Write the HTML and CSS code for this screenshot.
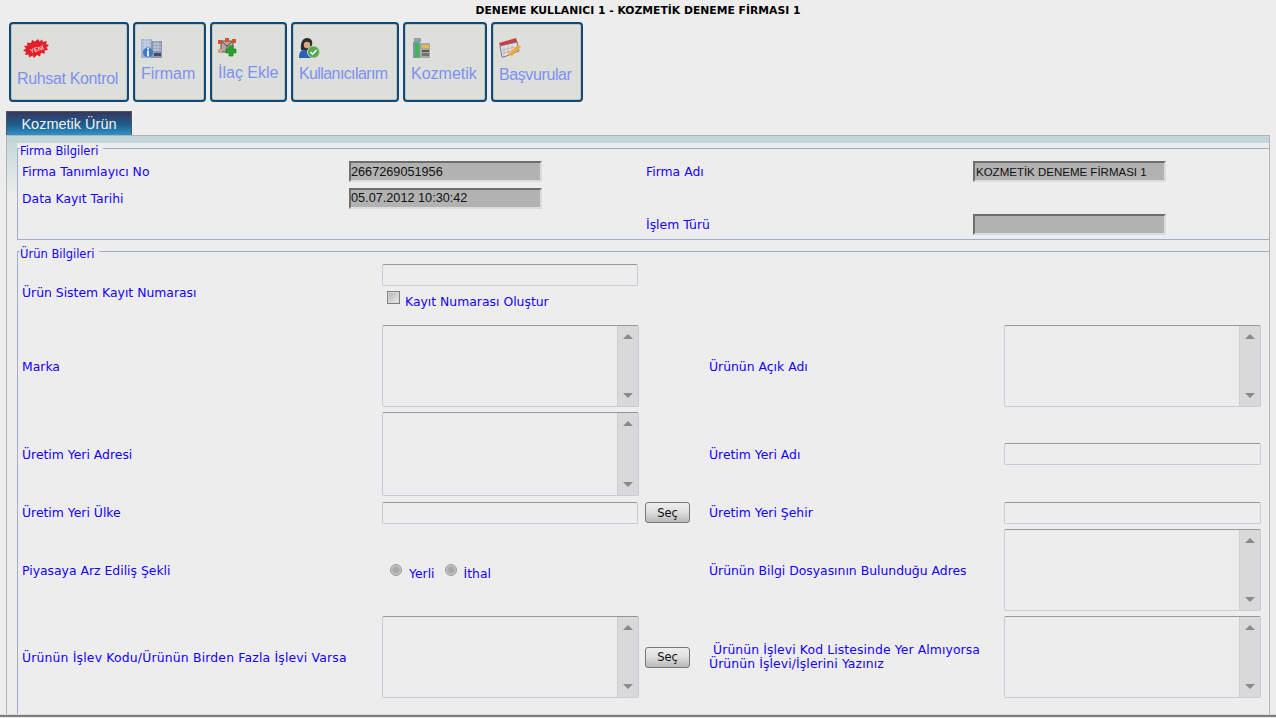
FILE: index.html
```html
<!DOCTYPE html>
<html lang="tr">
<head>
    <meta charset="UTF-8">
    <title>Kozmetik Ürün</title>
    <link rel="stylesheet" href="styles.css">
</head>
<body>
    <div class="title">DENEME KULLANICI 1 - KOZMETİK DENEME FİRMASI 1</div>

    <!-- Ust menu -->
    <nav class="menu">
        <a class="menu-btn btn-ruhsat">
            <svg class="menu-icon" width="26" height="21" viewBox="0 0 26 21">
                <polygon fill="#e3202a" points="15,1 16.500,3.500 19,1.500 20,4 24,3 23,6 26,7 23.500,9.500 25,12 21.500,12.500 22,15.500 18,15 17,18.500 14,17 11,20 9.500,17.500 6,19.500 5.500,16.500 2,17 3,14 0,12.500 3,10.500 1,8 4.500,7.500 4,4.500 8,5 9,2 12,3.500"/>
                <text x="6.500" y="13.500" font-size="6" font-weight="bold" fill="#f8c8c8" font-family="Liberation Sans" transform="rotate(-16 13 10)">YENİ</text>
            </svg>
            <span>Ruhsat Kontrol</span>
        </a>
        <a class="menu-btn btn-firmam">
            <svg class="menu-icon" width="21" height="21" viewBox="0 0 21 21">
                <rect x="0" y="1" width="11" height="19" fill="#a4b6d8"/>
                <rect x="10" y="3" width="11" height="17" fill="#8b98b0"/>
                <path d="M1 4h9M1 7h9M1 10h9M12 6h8M12 9h8M12 12h8M4 1v9M7 1v9M14 3v10M17 3v10" stroke="#d3dcee" stroke-width=".8"/>
                <circle cx="7" cy="14.500" r="5" fill="#3d78c9"/>
                <rect x="6" y="12.500" width="2" height="6" fill="#e8f0ff"/>
                <rect x="6" y="10" width="2" height="1.500" fill="#e8f0ff"/>
                <rect x="13" y="15" width="7" height="3" fill="#424c62"/>
            </svg>
            <span>Firmam</span>
        </a>
        <a class="menu-btn btn-ilac">
            <svg class="menu-icon" width="19" height="19" viewBox="0 0 19 19">
                <path d="M3 3h12v11H3z" fill="#b3a79c" stroke="#5e5247"/>
                <path d="M3 3l6 5 6-5M9 8v6" stroke="#5e5247" fill="none"/>
                <rect x="0" y="2" width="4" height="4" fill="#d8502a"/>
                <rect x="7" y="0" width="4" height="4" fill="#d8502a"/>
                <rect x="14" y="1" width="4" height="4" fill="#d8502a"/>
                <rect x="0" y="11" width="4" height="4" fill="#d8a08a"/>
                <path d="M11 8h4v3h3v4h-3v3h-4v-3H8v-4h3z" fill="#27a32f" stroke="#137a1c" stroke-width=".6"/>
            </svg>
            <span>İlaç Ekle</span>
        </a>
        <a class="menu-btn btn-kullanici">
            <svg class="menu-icon" width="21" height="21" viewBox="0 0 21 21">
                <path d="M0 20c0-6 2-8 5-8h4c3 0 4 2 4 8z" fill="#2a60b8"/>
                <path d="M2 12C1 4 4 0 8 0s6 3 5 7l-2 5z" fill="#2b2b33"/>
                <circle cx="8" cy="7" r="3.200" fill="#dba87e"/>
                <circle cx="14.500" cy="14" r="6" fill="#58a84f" stroke="#b7d8b0"/>
                <path d="M11.500 14l2.200 2.200L17.500 12" stroke="#fff" stroke-width="1.600" fill="none"/>
            </svg>
            <span>Kullanıcılarım</span>
        </a>
        <a class="menu-btn btn-kozmetik">
            <svg class="menu-icon" width="18" height="21" viewBox="0 0 18 21">
                <rect x="1" y="0" width="7" height="4" fill="#8fa0a8"/>
                <rect x="0" y="4" width="7" height="16" fill="#7f97a8"/>
                <rect x="2" y="5" width="4" height="14" fill="#3fb84f"/>
                <rect x="7" y="5" width="10" height="15" fill="#a7a9a6"/>
                <rect x="9" y="7" width="7" height="3" fill="#e9b949"/>
                <rect x="9" y="12" width="7" height="2" fill="#5a5a55"/>
                <rect x="9" y="15" width="7" height="3" fill="#74746c"/>
            </svg>
            <span>Kozmetik</span>
        </a>
        <a class="menu-btn btn-basvuru">
            <svg class="menu-icon" width="22" height="20" viewBox="0 0 22 20">
                <path d="M0 5l17-5 2 6-17 5z" fill="#cf3f38"/>
                <path d="M1 8l17-4 2 9-15 6H3z" fill="#e4dfe0" stroke="#6d7794"/>
                <path d="M5 9v8M9 8v8M13 7v6M3 12l13-3M4 15l8-2" stroke="#c0a9a0" stroke-width=".8"/>
                <path d="M9 16l10-9 3 2-9 9z" fill="#efa83a"/>
            </svg>
            <span>Başvurular</span>
        </a>
    </nav>

    <div class="tab">Kozmetik Ürün</div>

    <div class="panel">
        <fieldset class="group group-firma">
            <legend>Firma Bilgileri</legend>
            <div class="firma-grid">
                <label>Firma Tanımlayıcı No</label>
                <input class="readonly" type="text" value="2667269051956" readonly>
                <label>Firma Adı</label>
                <input class="readonly readonly-caps" type="text" value="KOZMETİK DENEME FİRMASI 1" readonly>

                <label>Data Kayıt Tarihi</label>
                <input class="readonly" type="text" value="05.07.2012 10:30:42" readonly>
                <span></span>
                <span></span>

                <span></span>
                <span></span>
                <label>İşlem Türü</label>
                <input class="readonly" type="text" readonly>
            </div>
        </fieldset>

        <fieldset class="group group-urun">
            <legend>Ürün Bilgileri</legend>
            <div class="urun-grid">
                <!-- Sistem kayit -->
                <label>Ürün Sistem Kayıt Numarası</label>
                <div class="kayit">
                    <input class="field" type="text">
                    <div class="check-line">
                        <span class="check"></span>
                        <label>Kayıt Numarası Oluştur</label>
                    </div>
                </div>
                <span></span>
                <span></span>

                <!-- Marka -->
                <label>Marka</label>
                <div class="memo"><textarea></textarea><div class="scroll"><i class="up"></i><i class="down"></i></div></div>
                <label>Ürünün Açık Adı</label>
                <div class="memo"><textarea></textarea><div class="scroll"><i class="up"></i><i class="down"></i></div></div>

                <!-- Uretim yeri -->
                <label>Üretim Yeri Adresi</label>
                <div class="memo memo-tall"><textarea></textarea><div class="scroll"><i class="up"></i><i class="down"></i></div></div>
                <label>Üretim Yeri Adı</label>
                <input class="field" type="text">

                <label>Üretim Yeri Ülke</label>
                <div class="with-btn">
                    <input class="field" type="text">
                    <button type="button" class="sec">Seç</button>
                </div>
                <label>Üretim Yeri Şehir</label>
                <input class="field" type="text">

                <!-- Arz sekli -->
                <label>Piyasaya Arz Ediliş Şekli</label>
                <div class="radios">
                    <span class="radio"></span>
                    <label>Yerli</label>
                    <span class="radio"></span>
                    <label>İthal</label>
                </div>
                <label>Ürünün Bilgi Dosyasının Bulunduğu Adres</label>
                <div class="memo"><textarea></textarea><div class="scroll"><i class="up"></i><i class="down"></i></div></div>

                <!-- Islev -->
                <label class="long">Ürünün İşlev Kodu/Ürünün Birden Fazla İşlevi Varsa</label>
                <div class="with-btn">
                    <div class="memo"><textarea></textarea><div class="scroll"><i class="up"></i><i class="down"></i></div></div>
                    <button type="button" class="sec">Seç</button>
                </div>
                <label class="two-line">&nbsp;Ürünün İşlevi Kod Listesinde Yer Almıyorsa<br>Ürünün İşlevi/İşlerini Yazınız</label>
                <div class="memo"><textarea></textarea><div class="scroll"><i class="up"></i><i class="down"></i></div></div>
            </div>
        </fieldset>
    </div>
    <div class="page-end"></div>
</body>
</html>
```

FILE: styles.css
```css
html, body {
    height: 718px;
    overflow: hidden;
}

body {
    margin: 0;
    background-color: #ededed;
    font-family: "DejaVu Sans", sans-serif;
    font-size: 12.4px;
    color: #1400ff;
}

.title {
    height: 22px;
    line-height: 21px;
    text-align: center;
    font-size: 10.8px;
    font-weight: bold;
    color: #000;
}

/* Ust menu */
.menu {
    display: flex;
    gap: 4px;
    padding-left: 9px;
    height: 80px;
}

.menu-btn {
    box-sizing: border-box;
    height: 80px;
    padding: 14px 0 0 6px;
    background: #dededa;
    border: 2px solid #0f4a78;
    border-radius: 4px;
    box-shadow: inset 0 0 0 1px #c6c6c0;
    font-family: "Liberation Sans", Arial, sans-serif;
    font-size: 16px;
    color: #7b92f2;
}

.menu-btn span {
    display: block;
    line-height: 18px;
}

.menu-icon {
    display: block;
    margin-bottom: 6px;
    filter: blur(0.35px);
}

.btn-ruhsat { width: 120px; }
.btn-ruhsat .menu-icon { margin: 0 0 11px 6px; }
.btn-ruhsat span { letter-spacing: -0.35px; }
.btn-firmam { width: 73px; }
.btn-ilac { width: 77px; }
.btn-ilac .menu-icon { margin-bottom: 7px; }
.btn-kullanici { width: 108px; }
.btn-kullanici span { letter-spacing: -0.6px; }
.btn-kozmetik { width: 84px; }
.btn-kozmetik .menu-icon { margin-left: 2px; }
.btn-basvuru { width: 92px; }
.btn-basvuru .menu-icon { margin-bottom: 8px; }
.btn-basvuru span { letter-spacing: -0.4px; }

.tab {
    box-sizing: border-box;
    width: 126px;
    height: 24px;
    margin: 9px 0 0 6px;
    line-height: 25px;
    text-align: center;
    font-family: "Liberation Sans", Arial, sans-serif;
    font-size: 14.5px;
    color: #f3f3f3;
    background: linear-gradient(#363760, #1d5c8c 55%, #2f93c9);
    border: 1px solid #555;
    border-bottom: 0;
}

.panel {
    box-sizing: border-box;
    width: 1264px;
    height: 579px;
    margin-left: 6px;
    padding: 4px 0 0 10px;
    border: 1px solid #b4b4b4;
    border-width: 1px 1px 0 1px;
    background-color: #ededed;
    background-image:
        linear-gradient(#c2d6d8, #c2d6d8),
        linear-gradient(#c2d6d8, #ededed);
    background-size: 100% 7px, 10px 60px;
    background-repeat: no-repeat;
}

.group {
    margin: 0;
    box-sizing: border-box;
    border: 1px solid #a3add0;
    border-right: 0;
    padding: 4px 0 0 4px;
}

.group legend {
    padding: 5px 5px 0 0;
    margin-left: -2px;
    font-size: 11.5px;
    line-height: 12px;
}

.group-firma {
    height: 100px;
}

.group-urun {
    height: 471px;
    margin-top: 3px;
    border-bottom: 0;
}

.firma-grid {
    display: grid;
    grid-template-columns: 327px 297px 327px 193px;
    grid-auto-rows: 21px;
    row-gap: 5.5px;
    align-items: center;
}

.urun-grid {
    display: grid;
    grid-template-columns: 360px 327px 295px 257px;
    grid-template-rows: 56px 82px 84px 23px 82px 82px;
    row-gap: 5px;
    align-items: center;
}

.urun-grid > .field {
    width: 257px;
}

.long {
    letter-spacing: 0.18px;
}

.two-line {
    line-height: 14px;
    letter-spacing: 0.1px;
}

/* Alanlar */
.readonly {
    box-sizing: border-box;
    width: 193px;
    height: 21px;
    padding: 0;
    background: #b2b2b2;
    border: 2px solid;
    border-color: #6e6e6e #dcdcdc #dcdcdc #6e6e6e;
    font-family: "Liberation Sans", Arial, sans-serif;
    font-size: 12.7px;
    color: #111;
}

.readonly-caps {
    padding-left: 1px;
    font-size: 11.5px;
}

.field {
    box-sizing: border-box;
    width: 256px;
    height: 22px;
    padding: 0 2px;
    background: #ededed;
    border: 1px solid #c8ccd8;
    border-top-color: #979797;
    border-radius: 2px;
}

.kayit {
    align-self: start;
}

.kayit .field {
    display: block;
}

.check-line {
    display: flex;
    align-items: flex-start;
    gap: 5px;
    margin: 5px 0 0 5px;
}

.check-line label {
    margin-top: 3px;
}

.check {
    box-sizing: border-box;
    width: 13px;
    height: 13px;
    border: 1px solid #808080;
    background: linear-gradient(135deg, #b0b0b0, #eeeeee);
    box-shadow: inset 0 0 0 1px #d8d8d8;
}

.memo {
    box-sizing: border-box;
    display: flex;
    flex: none;
    width: 257px;
    height: 82px;
    background: #ededed;
    border: 1px solid #c8ccd8;
    border-top-color: #979797;
    border-radius: 2px;
}

.memo-tall {
    height: 84px;
}

.memo textarea {
    flex: 1;
    min-width: 0;
    margin: 0;
    padding: 0;
    border: 0;
    outline: 0;
    resize: none;
    background: transparent;
}

.scroll {
    flex: none;
    display: flex;
    flex-direction: column;
    justify-content: space-between;
    align-items: center;
    box-sizing: border-box;
    width: 21px;
    padding: 8px 0;
    background: #d9d9d9;
    border-left: 1px solid #cfcfcf;
}

.scroll i {
    width: 0;
    height: 0;
    border-left: 5px solid transparent;
    border-right: 5px solid transparent;
}

.scroll .up { border-bottom: 5px solid #8a8a8a; }
.scroll .down { border-top: 5px solid #8a8a8a; }

.with-btn {
    display: flex;
    align-items: center;
    gap: 7px;
}

.sec {
    box-sizing: border-box;
    flex: none;
    width: 45px;
    height: 21px;
    padding: 0;
    background: linear-gradient(#eeeeee, #e0e0e0 45%, #b9b9b9);
    border: 1px solid #777;
    border-radius: 3px;
    font-family: "DejaVu Sans", sans-serif;
    font-size: 11.5px;
    color: #111;
}

.with-btn .memo + .sec {
    margin-left: -1px;
}

.radios {
    display: flex;
    align-items: center;
    gap: 7px;
    padding-left: 8px;
}

.radios label {
    margin: 7px 3px 0 0;
}

.radio {
    box-sizing: border-box;
    width: 12px;
    height: 12px;
    border: 1px solid #9a9a9a;
    border-radius: 50%;
    background: radial-gradient(#a8a8a8 35%, #e4e4e4);
}

.page-end {
    height: 2px;
    border-top: 1px solid #dcdcdc;
    background: #7c7c7c;
}
```
